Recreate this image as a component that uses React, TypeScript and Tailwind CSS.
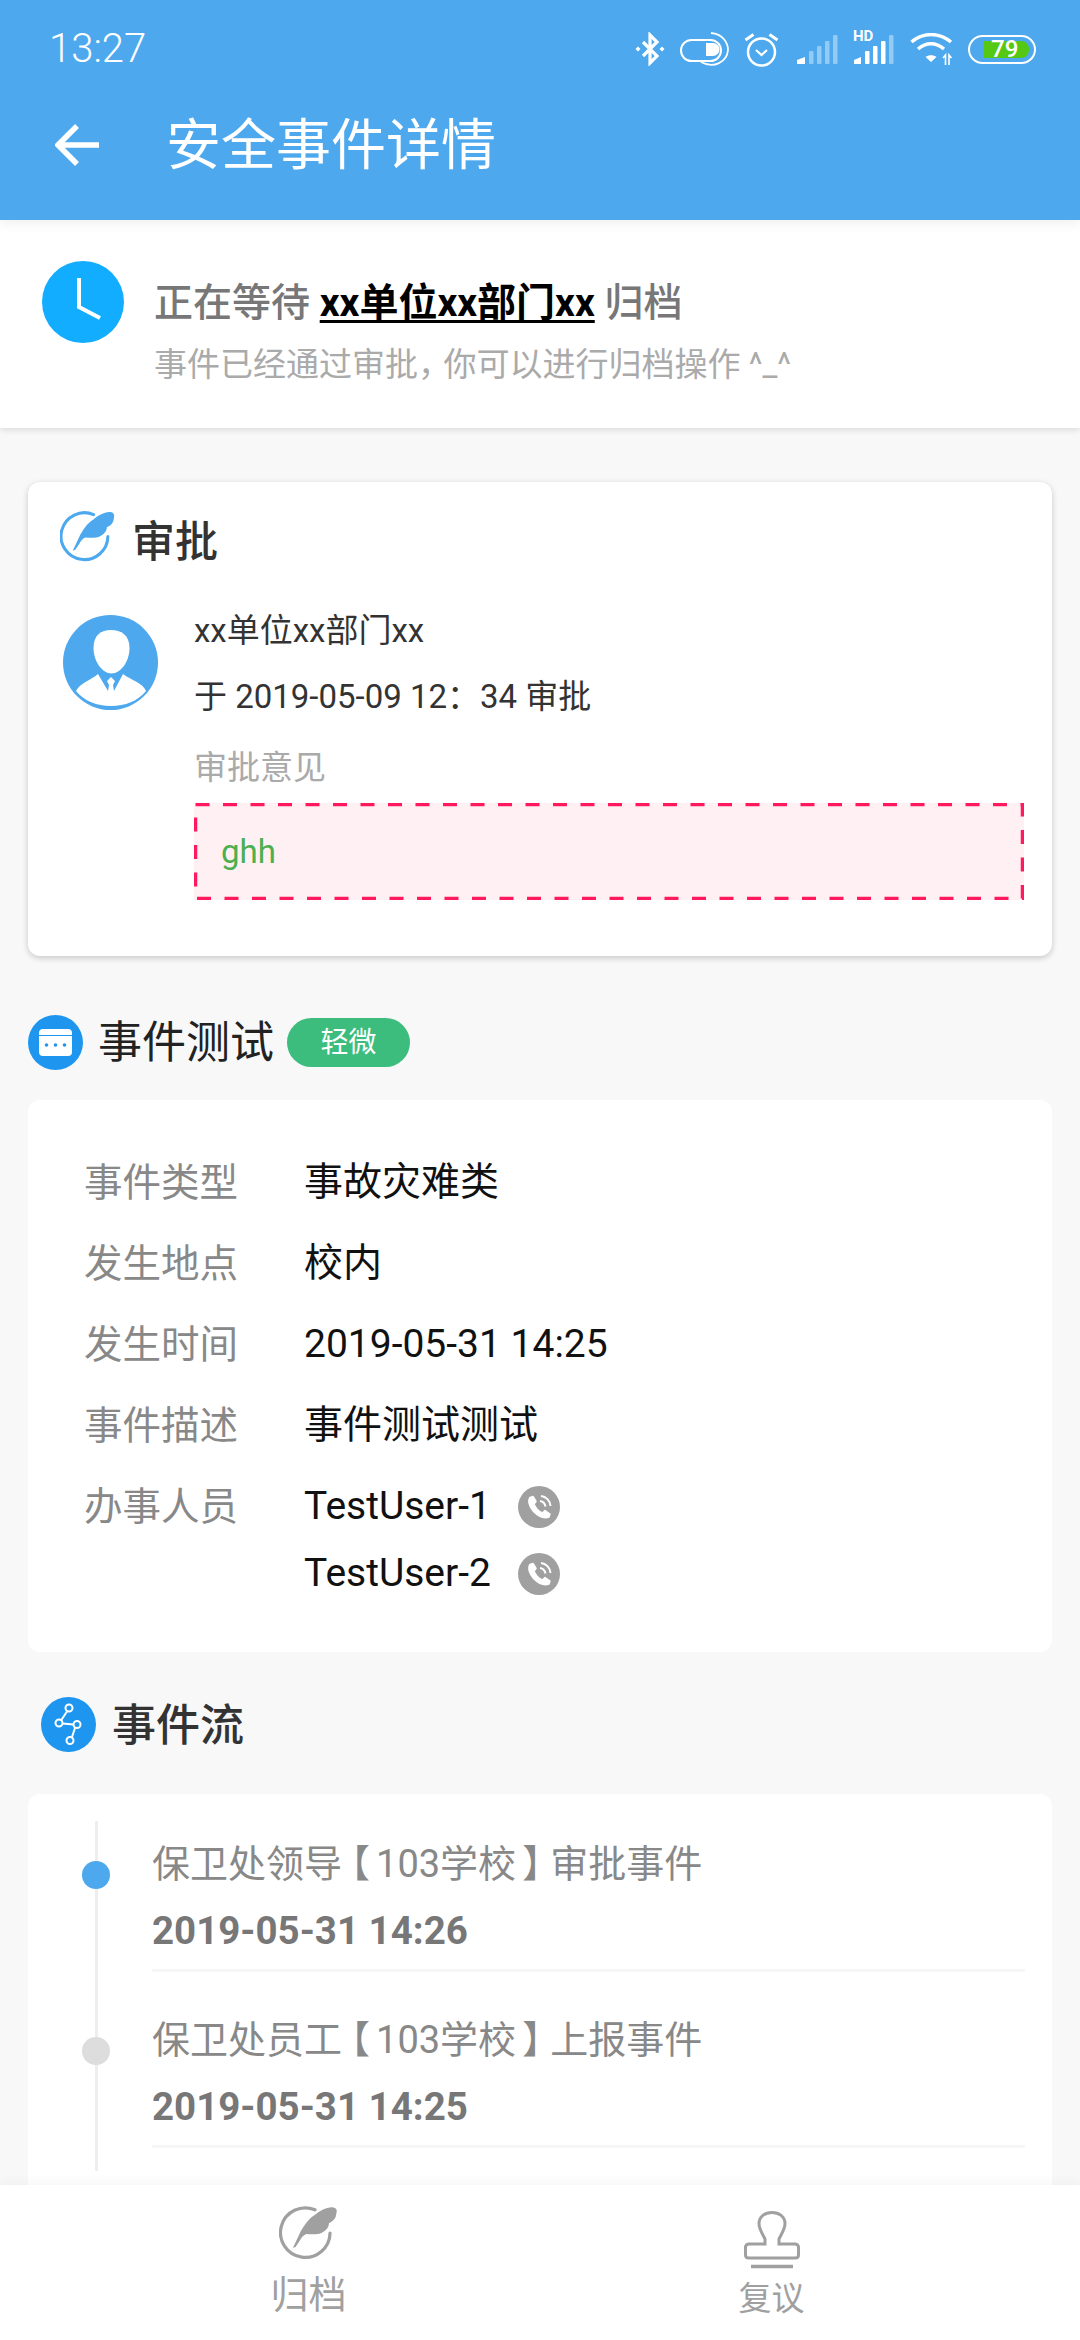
import React from 'react';

const FONT = "font-['Roboto','Noto_Sans_CJK_SC',sans-serif]";

const FeatherIcon = ({ color, className }: { color: string; className: string }) => (
  <svg viewBox="5 6 54 52" className={className}>
    <path d="M38 10.5A23 23 0 1 0 52 32" fill="none" stroke={color} strokeWidth="3" strokeLinecap="round" />
    <path
      d="M17.5 46L25 30C29 23 33 18 38 15C43 11 48 8.5 53 8C57 8 59 10 58 13C57.5 17 57 20 51 23C51 27 48 30 44 32C39 34 34 33 30 33C27 34 25 37 24 39L20 45Z"
      fill={color}
    />
  </svg>
);

const StatusIcons = () => (
  <div className="flex items-center gap-[15px]">
    {/* bluetooth */}
    <svg viewBox="0 0 30 34" className="w-[30px] h-[34px]">
      <path d="M8 10L22 24L15 31V3L22 10L8 24" fill="none" stroke="#fff" strokeWidth="3.2" />
      <path d="M3 14.5L5.5 17L3 19.5L0.5 17ZM27 14.5L29.5 17L27 19.5L24.5 17Z" fill="#fff" />
    </svg>
    {/* do not disturb toggle */}
    <svg viewBox="0 0 49 35" className="w-[49px] h-[35px]">
      <rect x="1" y="8" width="40" height="21" rx="10.5" fill="none" stroke="#fff" strokeWidth="2" />
      <path d="M26 11H33A6.5 6.5 0 0 1 33 24H26Z" fill="#fff" />
      <path d="M31 1C43 2 48 11 48 18C47 30 34 37 21 30" fill="none" stroke="#fff" strokeWidth="1.8" />
    </svg>
    {/* alarm */}
    <svg viewBox="0 0 38 35" className="w-[38px] h-[35px]">
      <circle cx="17.5" cy="20" r="13.5" fill="none" stroke="#fff" strokeWidth="2.5" />
      <path d="M12 18L17.5 23L23 18" fill="none" stroke="#fff" strokeWidth="2.2" />
      <path d="M1.5 8L9.5 2.5M25.5 2.5L33.5 8" stroke="#fff" strokeWidth="3" />
    </svg>
    {/* signal 1 */}
    <svg viewBox="0 0 41 29" className="w-[41px] h-[29px]">
      <path d="M0 29V25L8 22V29Z" fill="#fff" />
      <g fill="#fff" opacity="0.4">
        <rect x="12" y="16" width="4.5" height="13" rx="1" />
        <rect x="20" y="11" width="4.5" height="18" rx="1" />
        <rect x="28" y="6" width="4.5" height="23" rx="1" />
        <rect x="36" y="0" width="4.5" height="29" rx="1" />
      </g>
    </svg>
    {/* signal 2 with HD */}
    <div className="relative w-[42px] h-[29px]">
      <span className="absolute left-0 top-[-6px] text-[15px] leading-[14px] font-bold text-white">HD</span>
      <svg viewBox="0 0 42 29" className="w-[42px] h-[29px]">
        <path d="M1 29V25L8 22V29Z" fill="#fff" />
        <rect x="12" y="16" width="4.5" height="13" rx="1" fill="#fff" />
        <rect x="20" y="11" width="4.5" height="18" rx="1" fill="#fff" />
        <rect x="28" y="6" width="4.5" height="23" rx="1" fill="#fff" />
        <rect x="36" y="0" width="4.5" height="29" rx="1" fill="#fff" opacity="0.4" />
      </svg>
    </div>
    {/* wifi */}
    <svg viewBox="0 0 43 32" className="w-[43px] h-[32px]">
      <path d="M1.5 9C13 -1 29 -1 41 9" fill="none" stroke="#fff" strokeWidth="3.4" />
      <path d="M8 16C16 9 26 9 34 16" fill="none" stroke="#fff" strokeWidth="3.4" />
      <path d="M15.5 24C18.5 21.5 23.5 21.5 26.5 24L21 29Z" fill="#fff" />
      <path d="M33 25L35.5 22V32M39 32V22L41.5 25" fill="none" stroke="#fff" strokeWidth="1.6" />
    </svg>
    {/* battery */}
    <div className="relative w-[68px] h-[29px] rounded-[15px] border-[2.5px] border-white">
      <div className="absolute left-[14px] top-[4px] w-[45px] h-[17px] bg-[#55c814] rounded-r-[8px]" />
      <span className="absolute left-[21px] top-[-1px] text-[24px] leading-[27px] font-medium text-white">79</span>
    </div>
  </div>
);

const Avatar = () => (
  <svg viewBox="0 0 95 95" className="w-[95px] h-[95px] shrink-0 mt-[6px]">
    <circle cx="47.5" cy="47.5" r="47.5" fill="#4da8ee" />
    <path d="M48 15C58 15 66.5 20 66.5 33C66.5 46 58 58.5 48.5 58.5C39 58.5 30.5 46 30.5 33C30.5 20 38 15 48 15Z" fill="#fff" />
    <path
      d="M13 76C17 68 28 65 35 59L45 76L46 70L44 66L48 62L52 66L50 70L51 76L60 59C68 65 80 68 83 76C75 86 62 91 48 91C34 91 21 86 13 76Z"
      fill="#fff"
    />
  </svg>
);

const CardIcon = () => (
  <svg viewBox="0 0 55 55" className="w-[55px] h-[55px] shrink-0">
    <circle cx="27.5" cy="27.5" r="27.5" fill="#1e96f0" />
    <rect x="11" y="14" width="33" height="27" rx="4" fill="#fff" />
    <path d="M11 20.5H44" stroke="#1e96f0" strokeWidth="1" />
    <circle cx="18.5" cy="30" r="1.8" fill="#1e96f0" />
    <circle cx="27.5" cy="30" r="1.8" fill="#1e96f0" />
    <circle cx="36.5" cy="30" r="1.8" fill="#1e96f0" />
  </svg>
);

const FlowIcon = () => (
  <svg viewBox="0 0 55 55" className="w-[55px] h-[55px] shrink-0">
    <circle cx="27.5" cy="27.5" r="27.5" fill="#1e96f0" />
    <path d="M26 14.5L20 23.5M21.5 26.5L32.5 27.5M34 31L31 40" stroke="#fff" strokeWidth="2" />
    <g fill="none" stroke="#fff" strokeWidth="2">
      <circle cx="28" cy="11" r="3.5" />
      <circle cx="18" cy="26" r="3.5" />
      <circle cx="36" cy="27.5" r="3.5" />
      <circle cx="29" cy="43.5" r="3.5" />
    </g>
  </svg>
);

const PhoneIcon = () => (
  <svg viewBox="0 0 42 42" className="w-[42px] h-[42px] ml-[20px]">
    <circle cx="21" cy="21" r="21" fill="#a0a0a0" />
    <path
      d="M12 11.5L15 10.5L18 15.5L16 18C17 21.5 21 26 24.5 27L27 24.5L32 28L31 31C26 33 20 30 15.5 25.5C11.5 21 9.5 15 12 11.5Z"
      fill="#fff"
      stroke="#fff"
      strokeWidth="1.5"
      strokeLinejoin="round"
    />
    <path d="M22 15C25 15.5 27 17.5 27.5 20.5M23 10C28 10.5 32 14.5 32.5 20" fill="none" stroke="#fff" strokeWidth="2" />
  </svg>
);

const StampIcon = () => (
  <svg viewBox="0 0 58 59" className="w-[58px] h-[59px]">
    <path
      d="M22 28C19 22 16 18 16 12.5C16 5.5 22 1.5 29 1.5C36 1.5 42 5.5 42 12.5C42 18 39 22 36 28V33H52C54 33 55.5 34.5 55.5 36V44C55.5 46 54 47 52 47H6C4 47 2.5 46 2.5 44V36C2.5 34.5 4 33 6 33H22Z"
      fill="none"
      stroke="#a0a0a0"
      strokeWidth="3"
    />
    <path d="M8 55.5H50" stroke="#a0a0a0" strokeWidth="3.5" />
  </svg>
);

const infoRows = [
  ['事件类型', '事故灾难类'],
  ['发生地点', '校内'],
  ['发生时间', '2019-05-31 14:25'],
  ['事件描述', '事件测试测试'],
];

const flowItems = [
  { who: '保卫处领导', org: '103学校', action: '审批事件', time: '2019-05-31 14:26', dot: 'bg-[#4da8ee]' },
  { who: '保卫处员工', org: '103学校', action: '上报事件', time: '2019-05-31 14:25', dot: 'bg-[#dddddd]' },
];

export default function App() {
  return (
    <div className={`${FONT} w-[1080px] h-[2340px] flex flex-col overflow-hidden bg-[#f8f8f8]`}>
      <div className="relative z-10 h-[220px] shrink-0 bg-[#4da8ee] text-white shadow-[0_4px_10px_rgba(0,0,0,0.06)]">
        <div className="h-[98px] flex items-center justify-between pl-[49px] pr-[44px]">
          <span className="text-[40px] font-light">13:27</span>
          <StatusIcons />
        </div>
        <div className="h-[94px] flex items-center pl-[55px]">
          <svg viewBox="0 0 46 42" className="w-[46px] h-[42px]">
            <path d="M44 21H4M22 2L3 21L22 40" fill="none" stroke="#fff" strokeWidth="5.5" />
          </svg>
          <span className="ml-[65px] text-[55px] leading-[64px]">安全事件详情</span>
        </div>
      </div>

      <div className="flex-1 min-h-0 overflow-hidden">
        {/* banner */}
        <div className="h-[208px] bg-white shadow-[0_2px_6px_rgba(0,0,0,0.12)] flex items-start pt-[41px] pl-[42px]">
          <svg viewBox="0 0 82 82" className="w-[82px] h-[82px] shrink-0">
            <circle cx="41" cy="41" r="41" fill="#12adff" />
            <path d="M37 17V46L58 57" fill="none" stroke="#fff" strokeWidth="4" />
          </svg>
          <div className="ml-[30px] pt-[17px]">
            <div className="text-[39px] leading-[50px] font-medium text-[#777777]">
              正在等待 <span className="font-bold text-black underline underline-offset-[4px]">xx单位xx部门xx</span> 归档
            </div>
            <div className="mt-[15px] text-[33px] leading-[44px] text-[#aaaaaa]">
              事件已经通过审批<span className="mr-[9px] [font-feature-settings:'halt']">，</span>你可以进行归档操作 ^_^
            </div>
          </div>
        </div>

        {/* approval card */}
        <div className="mx-[28px] mt-[54px] bg-white rounded-[12px] shadow-[0_2px_6px_rgba(0,0,0,0.2)] pt-[30px] pb-[56px]">
          <div className="h-[60px] flex items-center pl-[32px]">
            <FeatherIcon color="#4da8ee" className="w-[55px] h-[53px] -mt-[11px]" />
            <span className="ml-[17px] text-[43px] font-medium text-[#333333]">审批</span>
          </div>
          <div className="flex items-start mt-[37px] pl-[35px] pr-[28px]">
            <Avatar />
            <div className="ml-[36px] flex-1">
              <div className="text-[33px] leading-[44px] text-[#333333]">xx单位xx部门xx</div>
              <div className="mt-[22px] text-[33px] leading-[44px] text-[#333333]">于 2019-05-09 12：34 审批</div>
              <div className="mt-[27px] text-[33px] leading-[44px] text-[#aaaaaa]">审批意见</div>
              <div className="relative mt-[13px] h-[97px] bg-[#fff0f3] flex items-center pl-[27px] text-[33px] text-[#4caf50]">
                ghh
                <svg className="absolute inset-0 w-full h-full">
                  <rect x="1.5" y="1.5" width="827" height="94" fill="none" stroke="#ff1a5e" strokeWidth="3.5" strokeDasharray="14 13.5" />
                </svg>
              </div>
            </div>
          </div>
        </div>

        {/* event section */}
        <div className="mt-[58px] ml-[28px] flex items-center h-[57px]">
          <CardIcon />
          <span className="ml-[15px] text-[44px] text-[#222222]">事件测试</span>
          <span className="ml-[13px] w-[123px] h-[49px] rounded-full bg-[#3dbd7d] text-white text-[28px] flex items-center justify-center">轻微</span>
        </div>
        <div className="mx-[28px] mt-[29px] bg-white rounded-[12px] pt-[42px] pb-[45px] pl-[56px]">
          {infoRows.map(([label, value]) => (
            <div key={label} className="flex h-[81px] items-center text-[39px]">
              <span className="w-[220px] text-[38.5px] text-[#888888]">{label}</span>
              <span className="text-[#111111]">{value}</span>
            </div>
          ))}
          <div className="flex text-[39px]">
            <span className="w-[220px] text-[38.5px] leading-[81px] text-[#888888]">办事人员</span>
            <div className="pt-[7px] text-[#111111]">
              {['TestUser-1', 'TestUser-2'].map((name) => (
                <div key={name} className="h-[67px] flex items-center">
                  <span className="w-[194px]">{name}</span>
                  <PhoneIcon />
                </div>
              ))}
            </div>
          </div>
        </div>

        {/* flow section */}
        <div className="mt-[44px] ml-[41px] flex items-center h-[56px]">
          <FlowIcon />
          <span className="ml-[16px] mt-[4px] text-[44px] font-medium text-[#333333]">事件流</span>
        </div>
        <div className="relative mx-[28px] mt-[42px] h-[560px] bg-white rounded-[12px] pt-[27px]">
          <div className="absolute left-[67px] top-[27px] w-[3px] h-[350px] bg-[#eeeeee]" />
          {flowItems.map((item) => (
            <div key={item.time} className="relative h-[176px] pl-[124px] pr-[27px] pt-[18px]">
              <div className={`absolute left-[54px] top-[40px] w-[28px] h-[28px] rounded-full ${item.dot}`} />
              <div className="text-[38px] leading-[50px] text-[#888888]">
                {item.who}
                <span className="ml-[8px] mr-[7px] [font-feature-settings:'palt']">【</span>
                {item.org}
                <span className="ml-[7px] mr-[8px] [font-feature-settings:'palt']">】</span>
                {item.action}
              </div>
              <div className="mt-[17px] text-[38.5px] leading-[50px] font-bold text-[#777777]">{item.time}</div>
              <div className="mt-[13px] h-[3px] bg-[#f6f6f6]" />
            </div>
          ))}
        </div>
      </div>

      {/* bottom bar */}
      <div className="relative h-[155px] shrink-0 bg-white shadow-[0_-4px_10px_rgba(0,0,0,0.03)] grid grid-cols-2 px-[77px]">
        <div className="flex flex-col items-center pt-[20px]">
          <FeatherIcon color="#a0a0a0" className="w-[59px] h-[56px]" />
          <span className="mt-[12px] text-[38px] leading-[44px] text-[#a0a0a0]">归档</span>
        </div>
        <div className="flex flex-col items-center pt-[26px]">
          <StampIcon />
          <span className="mt-[7px] text-[33px] leading-[44px] text-[#a0a0a0]">复议</span>
        </div>
      </div>
    </div>
  );
}
